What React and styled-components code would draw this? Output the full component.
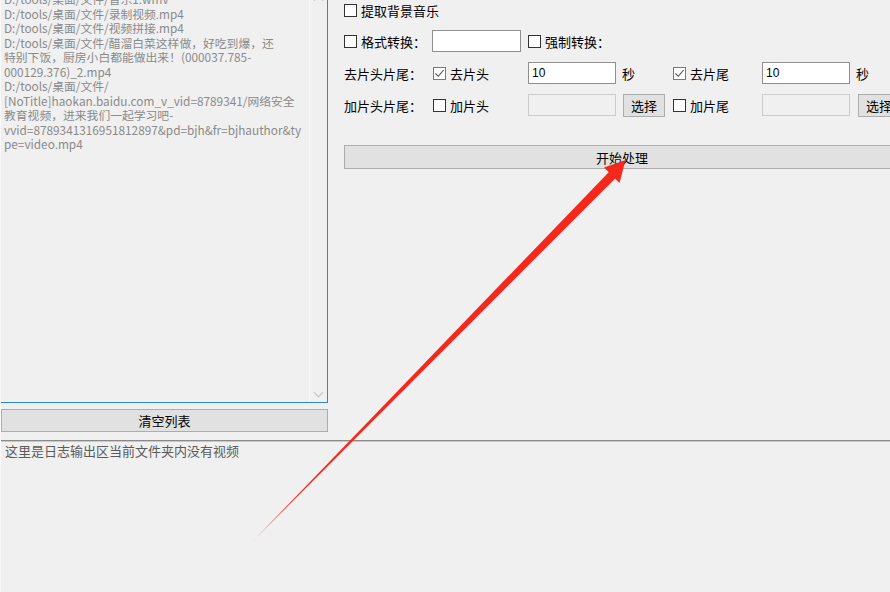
import styled, { createGlobalStyle } from "styled-components";

const GlobalStyle = createGlobalStyle`
  html, body {
    margin: 0;
    padding: 0;
    background: #f0f0f0;
    overflow: hidden;
  }
  body {
    font-family: "Noto Sans CJK SC", "Microsoft YaHei", sans-serif;
  }
`;

const fileLines = [
  "D:/tools/桌面/文件/音乐1.wmv",
  "D:/tools/桌面/文件/录制视频.mp4",
  "D:/tools/桌面/文件/视频拼接.mp4",
  "D:/tools/桌面/文件/醋溜白菜这样做，好吃到爆，还",
  "特别下饭，厨房小白都能做出来！(000037.785-",
  "000129.376)_2.mp4",
  "D:/tools/桌面/文件/",
  "[NoTitle]haokan.baidu.com_v_vid=8789341/网络安全",
  "教育视频，进来我们一起学习吧-",
  "vvid=8789341316951812897&pd=bjh&fr=bjhauthor&ty",
  "pe=video.mp4",
];

function CheckBox({ checked, children, w }) {
  return (
    <CheckLabel $w={w}>
      <Box $checked={checked}>
        {checked && (
          <svg width="11" height="11" viewBox="0 0 11 11">
            <path d="M1.5 5.5 L4.3 8.3 L9.5 2.2" fill="none" stroke="#555" strokeWidth="1.1" />
          </svg>
        )}
      </Box>
      {children}
    </CheckLabel>
  );
}

export default function App() {
  return (
    <>
      <GlobalStyle />
      <Window>
        <TopArea>
          <LeftPane>
            <ListBox>
              <ListContent>
                {fileLines.map((line, i) => (
                  <ListLine key={i}>{line}</ListLine>
                ))}
              </ListContent>
              <ScrollBar>
                <Chevron $up />
                <Chevron />
              </ScrollBar>
            </ListBox>
            <WideButton $w={327}>清空列表</WideButton>
          </LeftPane>

          <RightPane>
            <Row $h={20}>
              <CheckBox>提取背景音乐</CheckBox>
            </Row>
            <Row>
              <CheckBox w={88}>格式转换：</CheckBox>
              <TextInput $w={89} />
              <Spacer $w={7} />
              <CheckBox>强制转换：</CheckBox>
            </Row>
            <Row>
              <Label $w={89}>去片头片尾：</Label>
              <CheckBox checked w={95}>去片头</CheckBox>
              <TextInput $w={88}>10</TextInput>
              <Unit>秒</Unit>
              <CheckBox checked w={89}>去片尾</CheckBox>
              <TextInput $w={88}>10</TextInput>
              <Unit>秒</Unit>
            </Row>
            <Row>
              <Label $w={89}>加片头片尾：</Label>
              <CheckBox w={95}>加片头</CheckBox>
              <TextInput $w={88} $disabled />
              <SmallButton>选择</SmallButton>
              <Spacer $w={8} />
              <CheckBox w={89}>加片尾</CheckBox>
              <TextInput $w={88} $disabled />
              <SmallButton $ml={8}>选择</SmallButton>
            </Row>
            <StartButton $w={556}>开始处理</StartButton>
          </RightPane>
        </TopArea>

        <Separator />
        <LogArea>这里是日志输出区当前文件夹内没有视频</LogArea>

        <Annotation width="890" height="592" viewBox="0 0 890 592">
          <polygon
            points="252.3,540.7 253.7,539.3 614.5,178.2 608.2,171.8"
            fill="#f5281c"
          />
          <polygon points="603,167.5 624.5,160 618.5,183" fill="#f5281c" />
        </Annotation>
      </Window>
    </>
  );
}

const Window = styled.div`
  position: relative;
  width: 890px;
  height: 592px;
  overflow: hidden;
  display: flex;
  flex-direction: column;
  border-left: 1px solid #fafafa;
  box-sizing: border-box;
`;

const TopArea = styled.div`
  display: flex;
  height: 440px;
  flex-shrink: 0;
`;

const LeftPane = styled.div`
  width: 327px;
  flex-shrink: 0;
  display: flex;
  flex-direction: column;
`;

const ListBox = styled.div`
  height: 402px;
  display: flex;
  border-right: 1px solid #2f86d6;
  border-bottom: 1px solid #2f86d6;
`;

const ListContent = styled.div`
  flex: 1;
  overflow: hidden;
  padding: 0 0 0 3px;
`;

const ListLine = styled.div`
  white-space: nowrap;
  font-size: 11.8px;
  line-height: 14.5px;
  color: #8a8a8a;
  &:first-child {
    margin-top: -8px;
  }
`;

const ScrollBar = styled.div`
  width: 18px;
  flex-shrink: 0;
  border-left: 1px solid #f8f8f8;
  display: flex;
  flex-direction: column;
  justify-content: space-between;
  align-items: center;
  padding: 0 0 6px;
  box-sizing: border-box;
`;

const Chevron = styled.span`
  width: 6px;
  height: 6px;
  border-right: 1px solid #c2c2c2;
  border-bottom: 1px solid #c2c2c2;
  transform: rotate(${(p) => (p.$up ? "-135deg" : "45deg")});
  margin-top: ${(p) => (p.$up ? "-3px" : "0")};
`;

const WideButton = styled.div`
  width: ${(p) => p.$w}px;
  height: 23px;
  margin-top: 6px;
  box-sizing: border-box;
  background: #e1e1e1;
  border: 1px solid #adadad;
  display: flex;
  align-items: center;
  justify-content: center;
  font-size: 13px;
  color: #000;
  flex-shrink: 0;
`;

const StartButton = styled(WideButton)`
  height: 24px;
  margin-top: 19px;
`;

const RightPane = styled.div`
  margin-left: 16px;
  display: flex;
  flex-direction: column;
  gap: 10px;
`;

const Row = styled.div`
  display: flex;
  align-items: center;
  height: ${(p) => p.$h || 22}px;
  font-size: 13px;
  color: #000;
  white-space: nowrap;
`;

const CheckLabel = styled.label`
  display: flex;
  align-items: center;
  width: ${(p) => (p.$w ? `${p.$w}px` : "auto")};
  flex-shrink: 0;
`;

const Box = styled.span`
  width: 13px;
  height: 13px;
  box-sizing: border-box;
  border: 1px solid ${(p) => (p.$checked ? "#7a7a7a" : "#333")};
  background: #fff;
  margin-right: 4px;
  display: flex;
  align-items: center;
  justify-content: center;
`;

const Label = styled.span`
  width: ${(p) => p.$w}px;
  flex-shrink: 0;
`;

const TextInput = styled.div`
  width: ${(p) => p.$w}px;
  height: 22px;
  box-sizing: border-box;
  flex-shrink: 0;
  border: 1px solid ${(p) => (p.$disabled ? "#cccccc" : "#8f8f8f")};
  background: ${(p) => (p.$disabled ? "#f0f0f0" : "#fff")};
  font-family: "Liberation Sans", Arial, sans-serif;
  font-size: 12px;
  line-height: 20px;
  padding-left: 3px;
`;

const Unit = styled.span`
  width: 51px;
  margin-left: 6px;
  flex-shrink: 0;
`;

const Spacer = styled.span`
  width: ${(p) => p.$w}px;
  flex-shrink: 0;
`;

const SmallButton = styled.div`
  width: 42px;
  height: 23px;
  margin-left: ${(p) => p.$ml ?? 7}px;
  flex-shrink: 0;
  box-sizing: border-box;
  background: #e1e1e1;
  border: 1px solid #adadad;
  display: flex;
  align-items: center;
  justify-content: center;
  font-size: 13px;
`;

const Separator = styled.div`
  height: 0;
  border-top: 1px solid #8a8a8a;
  border-bottom: 1px solid #c8c8c8;
  width: 100%;
`;

const LogArea = styled.div`
  flex: 1;
  padding: 0 4px;
  font-size: 13px;
  line-height: 18px;
  color: #5a5a5a;
`;

const Annotation = styled.svg`
  position: absolute;
  left: 0;
  top: 0;
  pointer-events: none;
`;
